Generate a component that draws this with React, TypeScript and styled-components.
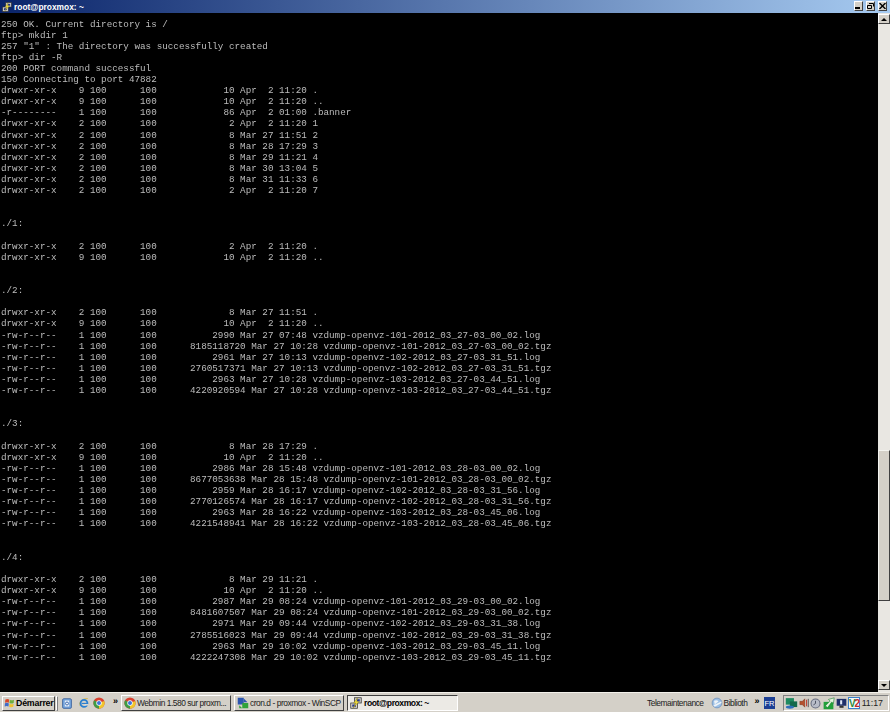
import React from 'react';
import styled, { createGlobalStyle } from 'styled-components';

const GlobalStyle = createGlobalStyle`
  html, body {
    margin: 0;
    padding: 0;
    background: #000;
    overflow: hidden;
  }
`;

const row = (perm: string, links: number, size: string, date: string, name: string) => {
  const width = size.length === 10 ? 16 : 14;
  return `${perm} ${String(links).padStart(4)} 100      100${size.padStart(width)} ${date} ${name}`;
};

const dir = 'drwxr-xr-x';
const file = '-rw-r--r--';

const stamps: Record<string, [string, string][]> = {
  '27': [['07:48', '10:28'], ['10:13', '10:13'], ['10:28', '10:28']],
  '28': [['15:48', '15:48'], ['16:17', '16:17'], ['16:22', '16:22']],
  '29': [['08:24', '08:24'], ['09:44', '09:44'], ['10:02', '10:02']],
};

const backups = (day: string, items: [string, string, string, string][]) =>
  items.flatMap(([vm, stamp, logSize, tgzSize], i) => {
    const times = stamps[day][i];
    const base = `vzdump-openvz-${vm}-2012_03_${day}-03_${stamp}`;
    return [
      row(file, 1, logSize, `Mar ${day} ${times[0]}`, `${base}.log`),
      row(file, 1, tgzSize, `Mar ${day} ${times[1]}`, `${base}.tgz`),
    ];
  });

const lines = [
  '250 OK. Current directory is /',
  'ftp> mkdir 1',
  '257 "1" : The directory was successfully created',
  'ftp> dir -R',
  '200 PORT command successful',
  '150 Connecting to port 47882',
  row(dir, 9, '10', 'Apr  2 11:20', '.'),
  row(dir, 9, '10', 'Apr  2 11:20', '..'),
  row('-r--------', 1, '86', 'Apr  2 01:00', '.banner'),
  row(dir, 2, '2', 'Apr  2 11:20', '1'),
  row(dir, 2, '8', 'Mar 27 11:51', '2'),
  row(dir, 2, '8', 'Mar 28 17:29', '3'),
  row(dir, 2, '8', 'Mar 29 11:21', '4'),
  row(dir, 2, '8', 'Mar 30 13:04', '5'),
  row(dir, 2, '8', 'Mar 31 11:33', '6'),
  row(dir, 2, '2', 'Apr  2 11:20', '7'),
  '',
  '',
  './1:',
  '',
  row(dir, 2, '2', 'Apr  2 11:20', '.'),
  row(dir, 9, '10', 'Apr  2 11:20', '..'),
  '',
  '',
  './2:',
  '',
  row(dir, 2, '8', 'Mar 27 11:51', '.'),
  row(dir, 9, '10', 'Apr  2 11:20', '..'),
  ...backups('27', [
    ['101', '00_02', '2990', '8185118720'],
    ['102', '31_51', '2961', '2760517371'],
    ['103', '44_51', '2963', '4220920594'],
  ]),
  '',
  '',
  './3:',
  '',
  row(dir, 2, '8', 'Mar 28 17:29', '.'),
  row(dir, 9, '10', 'Apr  2 11:20', '..'),
  ...backups('28', [
    ['101', '00_02', '2986', '8677053638'],
    ['102', '31_56', '2959', '2770126574'],
    ['103', '45_06', '2963', '4221548941'],
  ]),
  '',
  '',
  './4:',
  '',
  row(dir, 2, '8', 'Mar 29 11:21', '.'),
  row(dir, 9, '10', 'Apr  2 11:20', '..'),
  ...backups('29', [
    ['101', '00_02', '2987', '8481607507'],
    ['102', '31_38', '2971', '2785516023'],
    ['103', '45_11', '2963', '4222247308'],
  ]),
].join('\n');

const PuttyIcon = ({ size = 12 }: { size?: number }) => (
  <svg width={size} height={size} viewBox="0 0 16 16">
    <rect x="6" y="1" width="9" height="7" fill="#c8c8c8" stroke="#333" />
    <rect x="8" y="3" width="5" height="3" fill="#24348c" />
    <rect x="1" y="8" width="9" height="7" fill="#d4d0c8" stroke="#333" />
    <rect x="3" y="10" width="5" height="3" fill="#24348c" />
    <path d="M10 1 L5 8 L8 8 L4 15 L12 6 L9 6 Z" fill="#f4e23c" stroke="#8a7a10" strokeWidth="0.5" />
  </svg>
);

const FlagIcon = () => (
  <svg width="11" height="12" viewBox="0 0 16 16">
    <path d="M2 3 Q5 1 7.5 3 L7 7.5 Q4.5 6 1.5 7.5 Z" fill="#d8482a" />
    <path d="M8.5 3.2 Q11 5 14.5 3.2 L14 8 Q11 9.5 8 8 Z" fill="#6cae3a" />
    <path d="M1.4 8.5 Q4.5 7 7 8.6 L6.5 13 Q4 11.6 1 13 Z" fill="#3f6cc8" />
    <path d="M8 9 Q11 10.5 14 9 L13.5 13.6 Q10.5 15 7.5 13.4 Z" fill="#f0c22e" />
  </svg>
);

const ChromeIcon = ({ size = 12 }: { size?: number }) => (
  <svg width={size} height={size} viewBox="0 0 16 16">
    <circle cx="8" cy="8" r="7.5" fill="#d9412f" />
    <path d="M8 8 L1.5 4.3 A7.5 7.5 0 0 0 8 15.5 L11.7 8 Z" fill="#3f9c45" />
    <path d="M8 8 L15 5.4 A7.5 7.5 0 0 1 8 15.5 Z" fill="#f0c62b" />
    <circle cx="8" cy="8" r="3.6" fill="#fff" />
    <circle cx="8" cy="8" r="2.7" fill="#3f74d8" />
  </svg>
);

const IeIcon = () => (
  <svg width="12" height="12" viewBox="0 0 16 16">
    <path d="M3 12 Q1 8 4 5 Q7 2 13 2" fill="none" stroke="#d8b53a" strokeWidth="1.2" />
    <circle cx="8" cy="8.5" r="4.6" fill="none" stroke="#2a7fd0" strokeWidth="2.4" />
    <rect x="5" y="7.8" width="7" height="1.5" fill="#2a7fd0" />
    <rect x="9.5" y="9.4" width="4.5" height="2" fill="#dfdcd4" />
  </svg>
);

const MailIcon = () => (
  <svg width="12" height="13" viewBox="0 0 16 16">
    <rect x="2" y="1.5" width="12" height="13" rx="2" fill="#6f9fd8" stroke="#3a5f9a" />
    <rect x="5" y="4" width="6" height="8" fill="#e8f0fa" />
    <circle cx="8" cy="8" r="2" fill="none" stroke="#2f5fa8" strokeWidth="1.2" />
  </svg>
);

const WinScpIcon = () => (
  <svg width="12" height="12" viewBox="0 0 16 16">
    <rect x="1" y="1" width="8" height="9" fill="#2d56b0" />
    <rect x="7" y="8" width="8" height="7" fill="#2fa23a" />
    <path d="M3 11 L3 15 L7 15 Z" fill="#2fa23a" />
    <path d="M9 2 L14 7 L9 7 Z" fill="#2d56b0" />
  </svg>
);

const GlobeIcon = () => (
  <svg width="12" height="12" viewBox="0 0 16 16">
    <circle cx="8" cy="8" r="6.5" fill="#9cc0e6" stroke="#6a8cb8" />
    <path d="M4 5 Q8 3 10 6 Q7 8 5 10 Z" fill="#eef3f8" />
    <path d="M3 11 L14 6 L14 8 L5 13 Z" fill="#eef3f8" />
  </svg>
);

const MonitorTrayIcon = () => (
  <svg width="13" height="14" viewBox="0 0 16 16">
    <rect x="1" y="2" width="10" height="8" fill="#1f8a5f" />
    <rect x="6" y="6" width="9" height="7" fill="#14694a" />
    <ellipse cx="6" cy="13" rx="5" ry="2" fill="#2f6fb8" />
  </svg>
);

const SpeakerTrayIcon = () => (
  <svg width="10" height="12" viewBox="0 0 12 14">
    <path d="M1 5 L4 5 L7 2 L7 12 L4 9 L1 9 Z" fill="#b5502c" stroke="#6c2c14" strokeWidth="0.5" />
    <rect x="8.5" y="3" width="1.2" height="8" fill="#c0392b" />
    <rect x="10.5" y="2" width="1.2" height="10" fill="#555" />
  </svg>
);

const ClockTrayIcon = () => (
  <svg width="11" height="11" viewBox="0 0 16 16">
    <circle cx="8" cy="8" r="6.5" fill="#b8bcc8" stroke="#666c80" strokeWidth="1.5" />
    <path d="M8 4 L8 8 L5 10" fill="none" stroke="#4a4f60" strokeWidth="1.4" />
  </svg>
);

const ArrowTrayIcon = () => (
  <svg width="13" height="13" viewBox="0 0 16 16">
    <rect x="2" y="6" width="12" height="9" fill="#22a03a" />
    <path d="M4 11 L10 5 L8 3 L15 1 L14 8 L12 6 L7 13 Z" fill="#e6f5e0" stroke="#157a2a" strokeWidth="0.7" />
  </svg>
);

const ScreenTrayIcon = () => (
  <svg width="11" height="12" viewBox="0 0 16 16">
    <rect x="1" y="2" width="14" height="10" fill="#1e2f6a" />
    <rect x="6" y="4" width="3" height="6" fill="#dfe6f4" />
    <rect x="5" y="12" width="6" height="3" fill="#333" />
  </svg>
);

const VncBadge = styled.span`
  display: inline-flex;
  align-items: center;
  justify-content: center;
  width: 12px;
  height: 12px;
  border: 1px solid #3a7fc8;
  background: #f4f8fc;
  box-sizing: border-box;
  font-size: 10px;
  font-weight: bold;
  letter-spacing: -1px;
  color: #2f8a3a;

  b {
    color: #c02a2a;
  }
`;

const Page = styled.div`
  width: 890px;
  height: 712px;
  display: flex;
  flex-direction: column;
  overflow: hidden;
  background: #000;
`;

const TitleBar = styled.div`
  flex: 0 0 13px;
  display: flex;
  align-items: center;
  padding: 0 3px 0 2px;
  gap: 2px;
  background: linear-gradient(90deg, #0a246a 0%, #a6caf0 100%);
`;

const TitleText = styled.span`
  flex: 1;
  font-family: 'Liberation Sans', Arial, sans-serif;
  font-size: 8.4px;
  font-weight: bold;
  color: #fff;
`;

const WindowButton = styled.span<{ $gap?: boolean }>`
  width: 9px;
  height: 10px;
  align-self: flex-start;
  margin-top: 1px;
  margin-left: ${(p) => (p.$gap ? '1px' : '0')};
  box-sizing: border-box;
  display: flex;
  align-items: center;
  justify-content: center;
  background: #d4d0c8;
  border: 1px solid;
  border-color: #fff #404040 #404040 #fff;
`;

const Console = styled.div`
  flex: 1;
  min-height: 0;
  display: flex;
`;

const Output = styled.pre`
  flex: 1;
  margin: 0;
  padding: 5.5px 0 0 1px;
  font-family: 'Liberation Mono', 'Courier New', monospace;
  font-size: 9.27px;
  line-height: 11.11px;
  color: #bcbcbc;
  filter: blur(0.3px);
`;

const ScrollBar = styled.div`
  flex: 0 0 12px;
  display: flex;
  flex-direction: column;
  background: #e9e7e2;
`;

const ScrollButton = styled.span<{ $end?: boolean }>`
  flex: 0 0 10px;
  margin-top: ${(p) => (p.$end ? 'auto' : '1px')};
  margin-bottom: ${(p) => (p.$end ? '2px' : '0')};
  display: flex;
  align-items: center;
  justify-content: center;
  box-sizing: border-box;
  background: #d4d0c8;
  border: 1px solid;
  border-color: #fff #404040 #404040 #fff;
`;

const ScrollThumb = styled.div`
  flex: 0 0 151px;
  margin-top: 426px;
  box-sizing: border-box;
  background: #d4d0c8;
  border: 1px solid;
  border-color: #f4f4f0 #404040 #404040 #f4f4f0;
`;

const Triangle = styled.span<{ $down?: boolean }>`
  width: 0;
  height: 0;
  border-left: 3px solid transparent;
  border-right: 3px solid transparent;
  border-bottom: ${(p) => (p.$down ? '0' : '3px solid #000')};
  border-top: ${(p) => (p.$down ? '3px solid #000' : '0')};
`;

const Taskbar = styled.div`
  flex: 0 0 20px;
  display: flex;
  align-items: center;
  box-sizing: border-box;
  padding: 1px 1px 0 2px;
  background: #d4d0c8;
  border-top: 1px solid #f2f0ea;
  font-family: 'Liberation Sans', Arial, sans-serif;
  font-size: 8.4px;
  letter-spacing: -0.45px;
  color: #222;

  svg {
    flex-shrink: 0;
  }
`;

const StartButton = styled.div`
  width: 53px;
  height: 15px;
  box-sizing: border-box;
  display: flex;
  align-items: center;
  gap: 1px;
  padding-left: 1px;
  border: 1px solid;
  border-color: #fff #404040 #404040 #fff;
  font-size: 8.8px;
  font-weight: bold;
  letter-spacing: -0.2px;
  color: #000;
`;

const Grip = styled.span`
  width: 2px;
  height: 15px;
  margin-left: 1px;
  box-sizing: border-box;
  border: 1px solid;
  border-color: #fff #808080 #808080 #fff;
`;

const QuickLaunch = styled.div`
  width: 63px;
  display: flex;
  align-items: center;
  gap: 3px;
  padding-left: 3px;
  box-sizing: border-box;

  > svg:nth-child(2) {
    margin-left: 2px;
  }
`;

const Chevron = styled.span<{ $left?: number }>`
  font-size: 9px;
  font-weight: bold;
  margin-top: -5px;
  margin-left: ${(p) => p.$left ?? 0}px;
  color: #000;
`;

const TaskButton = styled.div<{ $active?: boolean }>`
  width: ${(p) => (p.$active ? '111px' : '110px')};
  height: 16px;
  box-sizing: border-box;
  display: flex;
  align-items: center;
  gap: ${(p) => (p.$active ? '2px' : '1px')};
  padding-left: 2px;
  margin-right: 3px;
  white-space: nowrap;
  overflow: hidden;
  border: 1px solid;
  border-color: ${(p) =>
    p.$active ? '#404040 #fff #fff #404040' : '#fff #404040 #404040 #fff'};
  background: ${(p) => (p.$active ? '#eceae5' : '#d4d0c8')};
  font-weight: ${(p) => (p.$active ? 'bold' : 'normal')};
  font-size: ${(p) => (p.$active ? '8.6px' : '8.4px')};
  color: ${(p) => (p.$active ? '#000' : '#222')};
`;

const Toolbars = styled.div`
  margin-left: auto;
  display: flex;
  align-items: center;
`;

const ToolbarItem = styled.span`
  display: flex;
  align-items: center;
  gap: 1px;
  white-space: nowrap;
  margin-right: 7px;
`;

const LangBox = styled.span`
  width: 11px;
  height: 12px;
  margin: 0 8px 0 5px;
  display: flex;
  align-items: center;
  justify-content: center;
  background: #1c3f94;
  color: #fff;
  font-size: 7.5px;
  letter-spacing: 0;
`;

const Tray = styled.div`
  width: 106px;
  height: 16px;
  box-sizing: border-box;
  display: flex;
  align-items: center;
  gap: 1px;
  padding-left: 1px;
  border: 1px solid;
  border-color: #808080 #fff #fff #808080;
`;

const Clock = styled.span`
  margin-left: auto;
  margin-right: 5px;
  font-size: 8.8px;
  letter-spacing: 0;
`;

const App = () => (
  <Page>
    <GlobalStyle />
    <TitleBar>
      <PuttyIcon size={10} />
      <TitleText>root@proxmox: ~</TitleText>
      <WindowButton>
        <svg width="7" height="6" viewBox="0 0 7 6"><rect x="0" y="4" width="5" height="2" fill="#000" /></svg>
      </WindowButton>
      <WindowButton $gap>
        <svg width="7" height="6" viewBox="0 0 7 6">
          <path d="M2 0.5 H6.5 V3.5 M0.5 2.5 H4.5 V5.5 H0.5 Z" fill="none" stroke="#000" />
        </svg>
      </WindowButton>
      <WindowButton $gap>
        <svg width="7" height="6" viewBox="0 0 7 6">
          <path d="M0.5 0 L6.5 6 M6.5 0 L0.5 6" stroke="#000" strokeWidth="1.4" />
        </svg>
      </WindowButton>
    </TitleBar>
    <Console>
      <Output>{lines}</Output>
      <ScrollBar>
        <ScrollButton><Triangle /></ScrollButton>
        <ScrollThumb />
        <ScrollButton $end><Triangle $down /></ScrollButton>
      </ScrollBar>
    </Console>
    <Taskbar>
      <StartButton><FlagIcon />Démarrer</StartButton>
      <Grip />
      <QuickLaunch>
        <MailIcon />
        <IeIcon />
        <ChromeIcon />
        <Chevron $left={5}>»</Chevron>
      </QuickLaunch>
      <TaskButton><ChromeIcon />Webmin 1.580 sur proxm...</TaskButton>
      <TaskButton><WinScpIcon />cron.d - proxmox - WinSCP</TaskButton>
      <TaskButton $active><PuttyIcon />root@proxmox: ~</TaskButton>
      <Toolbars>
        <ToolbarItem>Telemaintenance</ToolbarItem>
        <ToolbarItem><GlobeIcon />Biblioth</ToolbarItem>
        <Chevron>»</Chevron>
        <LangBox>FR</LangBox>
        <Tray>
          <MonitorTrayIcon />
          <SpeakerTrayIcon />
          <ClockTrayIcon />
          <ArrowTrayIcon />
          <ScreenTrayIcon />
          <VncBadge>V<b>2</b></VncBadge>
          <Clock>11:17</Clock>
        </Tray>
      </Toolbars>
    </Taskbar>
  </Page>
);

export default App;
